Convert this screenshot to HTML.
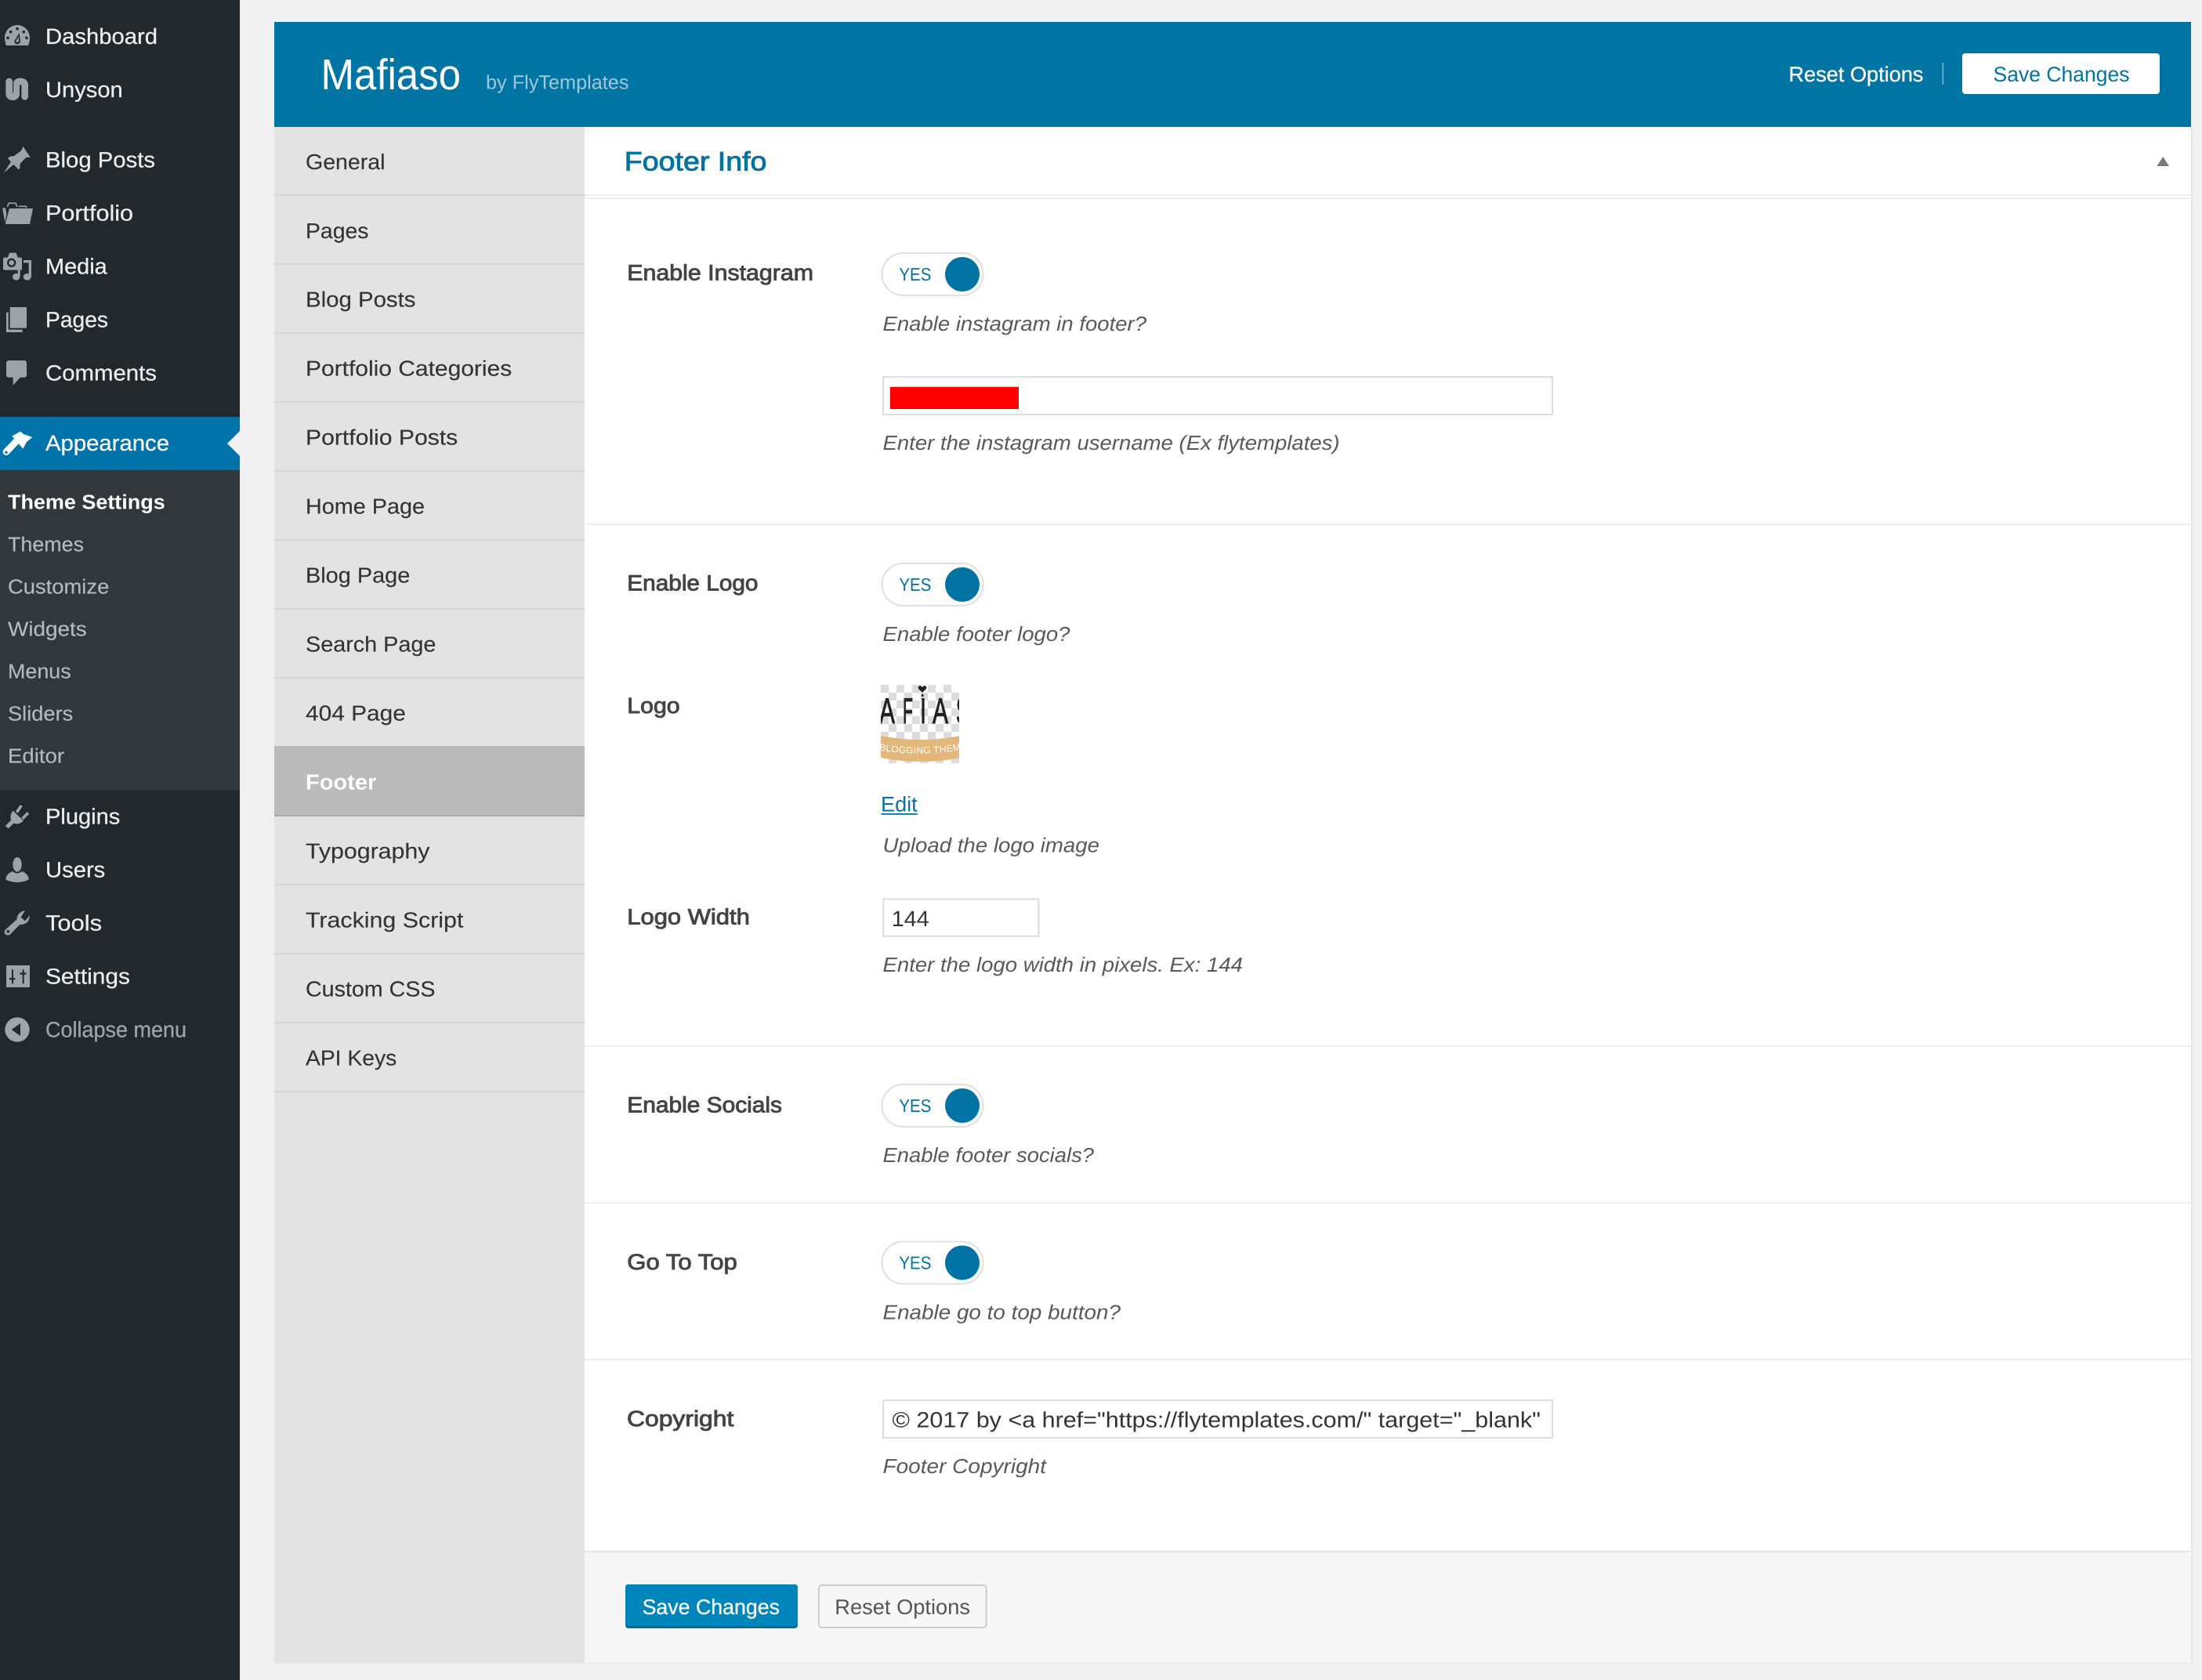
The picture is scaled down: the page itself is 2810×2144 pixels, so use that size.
<!DOCTYPE html>
<html lang="en">
<head>
<meta charset="utf-8">
<title>Mafiaso Theme Settings</title>
<style>
html,body{margin:0;padding:0;background:#f1f1f1;width:2810px;height:2144px;overflow:hidden}
svg{display:block}
text{font-family:"Liberation Sans",sans-serif;white-space:pre;text-rendering:geometricPrecision}
.m{font-size:28px;fill:#eeeeee;stroke:#eeeeee;stroke-width:.25px}
.s{font-size:26px;fill:#b4b9be;stroke:#b4b9be;stroke-width:.2px}
.n{font-size:27.5px;fill:#333333;stroke:#333333;stroke-width:.15px}
.l{font-size:28px;fill:#444444;stroke:#444444;stroke-width:.9px}
.h{font-size:26px;fill:#595959;font-style:italic}
.y{font-size:23px;fill:#0073a5}
.b{font-size:27px}
.i{fill:#9ea3a8}
</style>
</head>
<body>
<svg xmlns="http://www.w3.org/2000/svg" width="2810" height="2144" viewBox="0 0 2810 2144">
<defs>
<pattern id="chk" x="1124" y="874" width="20" height="20" patternUnits="userSpaceOnUse">
<rect width="20" height="20" fill="#ffffff"/>
<rect width="10" height="10" fill="#dcdcdc"/>
<rect x="10" y="10" width="10" height="10" fill="#dcdcdc"/>
</pattern>
<clipPath id="lg"><rect x="1124" y="874" width="100" height="100"/></clipPath>
<clipPath id="cp"><rect x="1130" y="1790" width="848" height="42"/></clipPath>
<path id="bandcurve" d="M1120 957 Q1174 967 1240 955"/>
</defs>

<rect width="2810" height="2144" fill="#f1f1f1"/>

<!-- admin sidebar -->
<rect x="0" y="0" width="306" height="2144" fill="#23282d"/>
<rect x="0" y="600" width="306" height="408" fill="#32373c"/>
<rect x="0" y="532" width="306" height="68" fill="#0073aa"/>
<path d="M306 550 L290 566 L306 582Z" fill="#f1f1f1"/>

<g transform="scale(.33333)" class="i">
<!-- dashboard -->
<path d="M24 174 Q18 160 18 144 A48 48 0 0 1 114 144 Q114 160 108 174Z"/>
<g fill="#23282d"><circle cx="66" cy="110" r="5.5"/><circle cx="41" cy="122" r="5.5"/><circle cx="91" cy="122" r="5.5"/><circle cx="30" cy="145" r="5.5"/><circle cx="102" cy="145" r="5.5"/><path d="M74 126 L78 160 Q72 172 60 168 Q52 160 58 152Z"/></g>
<path d="M71 140 L72 158 Q68 164 63 161 Q60 157 63 153Z"/>
<!-- unyson -->
<path d="M35 312 V358 Q35 371 49 371 Q62 371 62 358 V326 Q62 312 78 312 Q95 312 95 326 V370" fill="none" stroke="#9ea3a8" stroke-width="26" stroke-linecap="round"/>
<path d="M50 304 V352 M80 336 V382" stroke="#23282d" stroke-width="3" fill="none"/>
<!-- pin -->
<path d="M88 560 L117 604 Q104 600 98 604 L76 628 Q79 642 72 650 L52 630 L14 662 L42 620 L30 606 Q38 596 52 598 L80 578 Q86 570 88 560Z"/>
<!-- folder -->
<path d="M20 858 L36 798 H126 L114 858Z"/>
<path d="M9 796 L19 850 L25 820 L21 796Z"/>
<path d="M28 792 L34 778 H60 L66 792 M72 790 H100 V796" fill="none" stroke="#9ea3a8" stroke-width="5"/>
<!-- media -->
<path d="M18 986 H30 L36 968 H62 L68 986 H78 Q84 986 84 992 V1028 Q84 1034 78 1034 H18 Q12 1034 12 1028 V992 Q12 986 18 986Z"/>
<circle cx="44" cy="1006" r="17" fill="#23282d"/><circle cx="44" cy="1006" r="10"/>
<path d="M90 996 H120 V1060 H110 V1006 H90Z"/>
<ellipse cx="104" cy="1060" rx="15" ry="13"/><ellipse cx="62" cy="1060" rx="14" ry="13"/><rect x="68" y="1034" width="9" height="26"/>
<!-- pages -->
<rect x="38" y="1176" width="64" height="80"/>
<path d="M24 1196 H32 V1262 H86 V1272 H24Z"/>
<!-- comments -->
<path d="M24 1390 Q24 1380 34 1380 H92 Q102 1380 102 1390 V1435 Q102 1445 92 1445 H78 L50 1475 V1445 H34 Q24 1445 24 1435Z"/>
</g>

<g transform="translate(0,520) scale(.33333)">
<path d="M46 110 L78 92 L90 102 L124 114 L102 132 L88 158Z" fill="#ffffff"/>
<path d="M64 128 L24 170" stroke="#ffffff" stroke-width="26" stroke-linecap="round" fill="none"/>
<circle cx="24" cy="172" r="5" fill="#0073aa"/>
</g>

<g transform="translate(0,1000) scale(.33333)" class="i">
<!-- plugin -->
<path d="M50 104 L90 142 Q72 160 52 152 L32 172 L21 162 L42 140 Q36 120 50 104Z"/>
<path d="M64 110 L82 84 M86 134 L108 112" stroke="#9ea3a8" stroke-width="11" fill="none"/>
<!-- user -->
<ellipse cx="66" cy="310" rx="17" ry="28"/>
<path d="M22 368 Q22 346 48 336 Q66 350 84 336 Q110 346 110 368 Q66 388 22 368Z"/>
<!-- wrench -->
<path d="M96 486 Q66 492 64 520 L20 560 Q12 574 26 580 Q38 582 44 572 L76 540 Q112 540 114 504 L96 526 L80 512Z"/>
<circle cx="31" cy="566" r="5.5" fill="#23282d"/>
<!-- settings -->
<rect x="24" y="696" width="90" height="84" rx="3"/>
<g fill="#23282d"><rect x="45" y="712" width="6" height="54"/><rect x="36" y="744" width="22" height="7"/><rect x="86" y="712" width="6" height="54"/><rect x="76" y="724" width="24" height="7"/></g>
<!-- collapse -->
<circle cx="66" cy="942" r="47" fill="#a0a5aa"/>
<path d="M44 942 L78 918 V966Z" fill="#23282d"/>
</g>

<text class="m" x="58" y="56" textLength="143" lengthAdjust="spacingAndGlyphs">Dashboard</text>
<text class="m" x="58" y="124" textLength="98.7" lengthAdjust="spacingAndGlyphs">Unyson</text>
<text class="m" x="58" y="213.3" textLength="140" lengthAdjust="spacingAndGlyphs">Blog Posts</text>
<text class="m" x="58" y="281.5" textLength="112" lengthAdjust="spacingAndGlyphs">Portfolio</text>
<text class="m" x="58" y="349.3" textLength="78.7" lengthAdjust="spacingAndGlyphs">Media</text>
<text class="m" x="58" y="417.3" textLength="80" lengthAdjust="spacingAndGlyphs">Pages</text>
<text class="m" x="58" y="485.3" textLength="142" lengthAdjust="spacingAndGlyphs">Comments</text>
<text class="m" x="58" y="575" textLength="158" lengthAdjust="spacingAndGlyphs" style="fill:#fff;stroke:#fff">Appearance</text>
<text class="s" x="10" y="649.3" textLength="200.7" lengthAdjust="spacingAndGlyphs" style="fill:#fff;stroke:none;font-weight:700">Theme Settings</text>
<text class="s" x="10" y="703.3" textLength="97" lengthAdjust="spacingAndGlyphs">Themes</text>
<text class="s" x="10" y="757.3" textLength="129.3" lengthAdjust="spacingAndGlyphs">Customize</text>
<text class="s" x="10" y="811.5" textLength="100.7" lengthAdjust="spacingAndGlyphs">Widgets</text>
<text class="s" x="10" y="865.3" textLength="80.7" lengthAdjust="spacingAndGlyphs">Menus</text>
<text class="s" x="10" y="919.3" textLength="83.3" lengthAdjust="spacingAndGlyphs">Sliders</text>
<text class="s" x="10" y="973.3" textLength="72" lengthAdjust="spacingAndGlyphs">Editor</text>
<text class="m" x="58" y="1051.7" textLength="95.3" lengthAdjust="spacingAndGlyphs">Plugins</text>
<text class="m" x="58" y="1119.7" textLength="76.3" lengthAdjust="spacingAndGlyphs">Users</text>
<text class="m" x="58" y="1187.7" textLength="72" lengthAdjust="spacingAndGlyphs">Tools</text>
<text class="m" x="58" y="1255.7" textLength="108" lengthAdjust="spacingAndGlyphs">Settings</text>
<text class="m" x="58" y="1323.7" textLength="180" lengthAdjust="spacingAndGlyphs" style="fill:#a0a5aa;stroke:#a0a5aa">Collapse menu</text>

<!-- panel frame -->
<rect x="350" y="2122" width="2448" height="2" fill="#ebebeb"/>
<rect x="2796" y="162" width="2" height="1962" fill="#e6e6e6"/>
<rect x="350" y="162" width="396" height="1960" fill="#e3e3e3"/>
<rect x="746" y="162" width="2050" height="1818" fill="#ffffff"/>
<rect x="746" y="1980" width="2050" height="142" fill="#f6f6f6"/>
<rect x="746" y="1979" width="2050" height="2" fill="#e5e5e5"/>

<!-- header -->
<rect x="350" y="28" width="2446" height="134" fill="#0074a3"/>
<text x="409.5" y="114" font-size="55" fill="#ffffff" textLength="178.5" lengthAdjust="spacingAndGlyphs">Mafiaso</text>
<text x="620" y="113.3" font-size="25" fill="#9fc8da" textLength="182.5" lengthAdjust="spacingAndGlyphs">by FlyTemplates</text>
<text class="b" x="2282.5" y="104" fill="#ffffff" stroke="#ffffff" stroke-width=".3" textLength="172" lengthAdjust="spacingAndGlyphs">Reset Options</text>
<rect x="2478.6" y="80" width="1.6" height="28" fill="#7fb8d0"/>
<rect x="2504" y="68" width="252" height="52" rx="4" fill="#ffffff"/>
<text class="b" x="2543.5" y="104" fill="#0074a3" textLength="174" lengthAdjust="spacingAndGlyphs">Save Changes</text>

<!-- left tabs -->
<rect x="350" y="952" width="396" height="88" fill="#bbbbbb"/>
<g fill="#d6d6d6">
<rect x="350" y="248" width="396" height="2"/><rect x="350" y="336" width="396" height="2"/><rect x="350" y="424" width="396" height="2"/><rect x="350" y="512" width="396" height="2"/><rect x="350" y="600" width="396" height="2"/><rect x="350" y="688" width="396" height="2"/><rect x="350" y="776" width="396" height="2"/><rect x="350" y="864" width="396" height="2"/><rect x="350" y="1040" width="396" height="2" fill="#aaaaaa"/><rect x="350" y="1128" width="396" height="2"/><rect x="350" y="1216" width="396" height="2"/><rect x="350" y="1304" width="396" height="2"/><rect x="350" y="1392" width="396" height="2"/>
</g>
<text class="n" x="390" y="216" textLength="101.5" lengthAdjust="spacingAndGlyphs">General</text>
<text class="n" x="390" y="303.8" textLength="80.5" lengthAdjust="spacingAndGlyphs">Pages</text>
<text class="n" x="390" y="391.7" textLength="140.5" lengthAdjust="spacingAndGlyphs">Blog Posts</text>
<text class="n" x="390" y="479.5" textLength="263.2" lengthAdjust="spacingAndGlyphs">Portfolio Categories</text>
<text class="n" x="390" y="567.4" textLength="194.2" lengthAdjust="spacingAndGlyphs">Portfolio Posts</text>
<text class="n" x="390" y="655.4" textLength="152" lengthAdjust="spacingAndGlyphs">Home Page</text>
<text class="n" x="390" y="743.3" textLength="133.3" lengthAdjust="spacingAndGlyphs">Blog Page</text>
<text class="n" x="390" y="831.3" textLength="166.4" lengthAdjust="spacingAndGlyphs">Search Page</text>
<text class="n" x="390" y="919.5" textLength="127.9" lengthAdjust="spacingAndGlyphs">404 Page</text>
<text class="n" x="390" y="1007.6" textLength="90.3" lengthAdjust="spacingAndGlyphs" style="fill:#fff;stroke:none;font-weight:700">Footer</text>
<text class="n" x="390" y="1095.6" textLength="158.4" lengthAdjust="spacingAndGlyphs">Typography</text>
<text class="n" x="390" y="1183.5" textLength="201.4" lengthAdjust="spacingAndGlyphs">Tracking Script</text>
<text class="n" x="390" y="1271.5" textLength="165.5" lengthAdjust="spacingAndGlyphs">Custom CSS</text>
<text class="n" x="390" y="1359.5" textLength="116.2" lengthAdjust="spacingAndGlyphs">API Keys</text>

<!-- section title -->
<text x="796.8" y="217.3" font-size="34" fill="#0073a5" stroke="#0073a5" stroke-width=".9" textLength="181.6" lengthAdjust="spacingAndGlyphs">Footer Info</text>
<path d="M2752.5 212 L2760.2 200 L2768 212Z" fill="#777777"/>
<rect x="746" y="248" width="2050" height="2" fill="#eeeeee"/>
<rect x="746" y="252" width="2050" height="2" fill="#eeeeee"/>

<!-- row dividers -->
<g fill="#eeeeee">
<rect x="746" y="668" width="2050" height="2"/>
<rect x="746" y="1334" width="2050" height="2"/>
<rect x="746" y="1534" width="2050" height="2"/>
<rect x="746" y="1734" width="2050" height="2"/>
</g>

<!-- Enable Instagram -->
<text class="l" x="800.3" y="357.3" textLength="237.7" lengthAdjust="spacingAndGlyphs">Enable Instagram</text>
<rect x="1125.5" y="323" width="129" height="54" rx="27" fill="#fff" stroke="#e0e0e0" stroke-width="2"/>
<circle cx="1228" cy="350" r="22" fill="#0073a5"/>
<text class="y" x="1147.4" y="358" textLength="41" lengthAdjust="spacingAndGlyphs">YES</text>
<text class="h" x="1126.5" y="422" textLength="336.5" lengthAdjust="spacingAndGlyphs">Enable instagram in footer?</text>
<rect x="1127" y="481" width="854" height="48" fill="#fff" stroke="#dddddd" stroke-width="2"/>
<rect x="1135.8" y="493.7" width="164.2" height="28.3" fill="#ff0000"/>
<text class="h" x="1126.5" y="574" textLength="583.1" lengthAdjust="spacingAndGlyphs">Enter the instagram username (Ex flytemplates)</text>

<!-- Enable Logo -->
<text class="l" x="800.3" y="753.6" textLength="167.2" lengthAdjust="spacingAndGlyphs">Enable Logo</text>
<rect x="1125.5" y="719" width="129" height="54" rx="27" fill="#fff" stroke="#e0e0e0" stroke-width="2"/>
<circle cx="1228" cy="746" r="22" fill="#0073a5"/>
<text class="y" x="1147.4" y="754" textLength="41" lengthAdjust="spacingAndGlyphs">YES</text>
<text class="h" x="1126.5" y="818" textLength="239" lengthAdjust="spacingAndGlyphs">Enable footer logo?</text>

<!-- Logo -->
<text class="l" x="800.3" y="910" textLength="67.3" lengthAdjust="spacingAndGlyphs">Logo</text>
<g clip-path="url(#lg)">
<rect x="1124" y="874" width="100" height="100" fill="url(#chk)"/>
<path d="M1120 938 Q1174 950 1230 938 V966 Q1174 978 1120 966Z" fill="#e3b779"/>
<g font-size="46" fill="#222222" stroke="#222222" stroke-width="1">
<text x="1122" y="923" textLength="20" lengthAdjust="spacingAndGlyphs">A</text>
<text x="1152" y="923" textLength="13" lengthAdjust="spacingAndGlyphs">F</text>
<text x="1174" y="923" textLength="8" lengthAdjust="spacingAndGlyphs">I</text>
<text x="1190" y="923" textLength="20" lengthAdjust="spacingAndGlyphs">A</text>
<text x="1220" y="923" textLength="16" lengthAdjust="spacingAndGlyphs">S</text>
</g>
<path d="M1177 884 L1172 879 Q1171 875 1175 875 L1177 877 L1179 875 Q1183 875 1182 879Z" fill="#222222"/>
<rect x="1176" y="886" width="2.5" height="3" fill="#222222"/>
<text font-size="12" fill="#ffffff" letter-spacing=".3"><textPath href="#bandcurve" startOffset="2">BLOGGING THEME</textPath></text>
</g>
<text x="1124" y="1035.7" font-size="27" fill="#0073aa" textLength="46.7" lengthAdjust="spacingAndGlyphs">Edit</text>
<rect x="1124.5" y="1038" width="46.2" height="1.8" fill="#0073aa"/>
<text class="h" x="1126.5" y="1087.5" textLength="276.5" lengthAdjust="spacingAndGlyphs">Upload the logo image</text>

<!-- Logo Width -->
<text class="l" x="800.3" y="1179.3" textLength="156.5" lengthAdjust="spacingAndGlyphs">Logo Width</text>
<rect x="1127.3" y="1147.4" width="198" height="47.4" fill="#fff" stroke="#dddddd" stroke-width="2"/>
<text x="1137.8" y="1182" font-size="28" fill="#333333" textLength="47.9" lengthAdjust="spacingAndGlyphs">144</text>
<text class="h" x="1126.5" y="1240" textLength="459.5" lengthAdjust="spacingAndGlyphs">Enter the logo width in pixels. Ex: 144</text>

<!-- Enable Socials -->
<text class="l" x="800.3" y="1419.3" textLength="197.7" lengthAdjust="spacingAndGlyphs">Enable Socials</text>
<rect x="1125.5" y="1384" width="129" height="54" rx="27" fill="#fff" stroke="#e0e0e0" stroke-width="2"/>
<circle cx="1228" cy="1411" r="22" fill="#0073a5"/>
<text class="y" x="1147.4" y="1419" textLength="41" lengthAdjust="spacingAndGlyphs">YES</text>
<text class="h" x="1126.5" y="1483" textLength="269.5" lengthAdjust="spacingAndGlyphs">Enable footer socials?</text>

<!-- Go To Top -->
<text class="l" x="800.3" y="1619.8" textLength="140.5" lengthAdjust="spacingAndGlyphs">Go To Top</text>
<rect x="1125.5" y="1584.5" width="129" height="54" rx="27" fill="#fff" stroke="#e0e0e0" stroke-width="2"/>
<circle cx="1228" cy="1611.5" r="22" fill="#0073a5"/>
<text class="y" x="1147.4" y="1619.5" textLength="41" lengthAdjust="spacingAndGlyphs">YES</text>
<text class="h" x="1126.5" y="1683.5" textLength="303.5" lengthAdjust="spacingAndGlyphs">Enable go to top button?</text>

<!-- Copyright -->
<text class="l" x="800" y="1820" textLength="136.3" lengthAdjust="spacingAndGlyphs">Copyright</text>
<rect x="1127" y="1787" width="854" height="48" fill="#fff" stroke="#dddddd" stroke-width="2"/>
<text x="1138.5" y="1821.7" font-size="28" fill="#333333" textLength="827.5" lengthAdjust="spacingAndGlyphs" clip-path="url(#cp)">© 2017 by &lt;a href=&quot;https://flytemplates.com/&quot; target=&quot;_blank&quot;</text>
<text class="h" x="1126.5" y="1880" textLength="208.5" lengthAdjust="spacingAndGlyphs">Footer Copyright</text>

<!-- footer buttons -->
<rect x="798" y="2022" width="220" height="56" rx="4" fill="#006799"/>
<rect x="798" y="2022" width="220" height="53" rx="4" fill="#0085ba"/>
<text class="b" x="819.6" y="2060" fill="#ffffff" stroke="#ffffff" stroke-width=".3" textLength="175.4" lengthAdjust="spacingAndGlyphs">Save Changes</text>
<rect x="1045" y="2023" width="213.6" height="54" rx="4" fill="#f7f7f7" stroke="#cccccc" stroke-width="2"/>
<text class="b" x="1065.3" y="2060" fill="#555555" textLength="172.7" lengthAdjust="spacingAndGlyphs">Reset Options</text>
</svg>
</body>
</html>
